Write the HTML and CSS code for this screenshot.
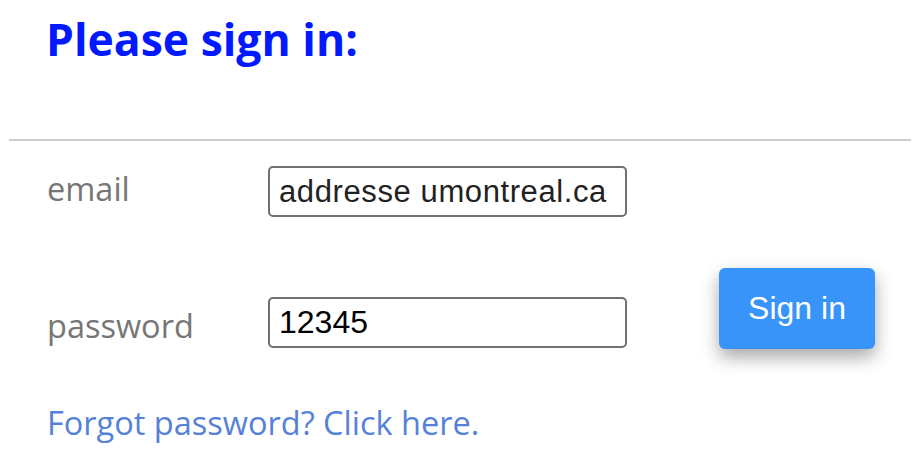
FILE: index.html
```html
<!DOCTYPE html>
<html lang="en">
<head>
  <meta charset="UTF-8" />
  <meta name="viewport" content="width=device-width, initial-scale=1.0"/>
  <title>Sign in</title>
  <link rel="stylesheet" href="styles.css">
</head>
<body>
  <h1 class="title">Please sign in:</h1>
  <hr class="divider">

  <form class="login" onsubmit="return false;">
    <div class="fields">
      <div class="row row-top">
        <label class="label" for="email">email</label>
        <input class="field field-email" id="email" type="text" value="addresse umontreal.ca">
      </div>
      <div class="row row-bottom">
        <label class="label" for="password">password</label>
        <input class="field" id="password" type="text" value="12345">
      </div>
    </div>
    <button class="btn" type="submit">Sign in</button>
  </form>

  <a class="forgot" href="#">Forgot password? Click here.</a>
</body>
</html>
```

FILE: styles.css
```css
body {
    margin: 0;
    background: #ffffff;
    font-family: 'Open Sans', 'Noto Sans', sans-serif;
}

.title {
    margin: 0;
    padding: 11px 0 0 46px;
    font-size: 44.5px;
    line-height: 56px;
    font-weight: 700;
    color: #0019ff;
}

.divider {
    margin: 72px 7px 0 9px;
    border: 0;
    border-top: 2px solid #cccccc;
}

/* Form */
.login {
    display: flex;
    align-items: flex-end;
    gap: 92px;
    padding-left: 47px;
    margin-top: 25px;
}

.fields {
    display: flex;
    flex-direction: column;
    gap: 80px;
}

.row {
    display: flex;
}

.row-top {
    align-items: flex-start;
}

.row-bottom {
    align-items: flex-end;
}

.label {
    width: 221px;
    font-size: 32.5px;
    color: #767676;
}

.field {
    box-sizing: border-box;
    width: 359px;
    height: 51px;
    margin: 0;
    padding: 0 9px;
    border: 2px solid #707070;
    border-radius: 5px;
    font-family: 'Liberation Sans', Arial, sans-serif;
    font-size: 32px;
    color: #000000;
    outline: none;
}

.field-email {
    font-size: 31px;
    letter-spacing: 0.6px;
    color: #222222;
}

.btn {
    width: 156px;
    height: 81px;
    margin-bottom: -1px;
    border: 0;
    border-radius: 6px;
    background: #3894f8;
    color: #ffffff;
    font-family: 'Liberation Sans', Arial, sans-serif;
    font-size: 32px;
    box-shadow: 0 8px 18px rgba(0, 0, 0, 0.35);
    cursor: pointer;
}

.forgot {
    display: inline-block;
    margin: 52px 0 0 47px;
    font-size: 32.5px;
    color: #5582d8;
    text-decoration: none;
}
```
